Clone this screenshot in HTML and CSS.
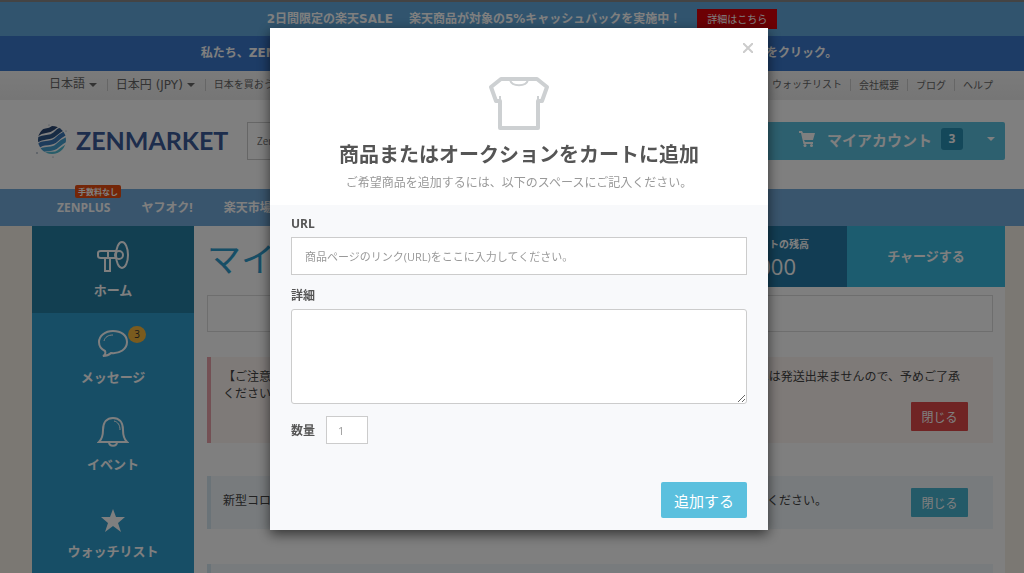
FILE: index.html
```html
<!DOCTYPE html>
<html lang="ja">
<head>
    <meta charset="UTF-8">
    <meta name="viewport" content="width=device-width, initial-scale=1.0">
    <title>ZenMarket</title>
    <link rel="stylesheet" href="styles.css">
</head>
<body>
    <div class="page">
        <div class="sale-banner">
            <span>2日間限定の楽天SALE</span>
            <span>楽天商品が対象の5%キャッシュバックを実施中！</span>
            <a href="#" class="sale-link">詳細はこちら</a>
        </div>
        <div class="notice-banner">
            <div class="notice-text"><span>私たち、ZENMARKET</span><span>をクリック。</span></div>
        </div>

        <div class="topbar">
            <div class="topbar-left">
                <a href="#">日本語 <i class="caret"></i></a>
                <a href="#">日本円 (JPY) <i class="caret"></i></a>
                <a href="#" class="small">日本を買おう</a>
            </div>
            <div class="topbar-right">
                <a href="#">ウォッチリスト</a>
                <a href="#">会社概要</a>
                <a href="#">ブログ</a>
                <a href="#">ヘルプ</a>
            </div>
        </div>

        <header class="header">
            <a href="#" class="logo">
                <svg width="32" height="34" viewBox="0 0 32 34">
                    <defs><clipPath id="globe"><circle cx="16" cy="16" r="14"/></clipPath></defs>
                    <g clip-path="url(#globe)" fill="none" stroke-width="4.500">
                        <path stroke="#2b4672" d="M-1 12C7 4 11 9 17 4S24 0 28-2"/>
                        <path stroke="#2f5688" d="M-1 18C7 10 13 16 19 10S27 5 32 2"/>
                        <path stroke="#3b78b8" d="M-1 25C8 15 14 22 20 16S27 11 33 7"/>
                        <path stroke="#46a0d0" d="M0 31C8 21 15 28 21 22S28 17 34 14"/>
                        <path stroke="#53bcd4" d="M5 35C11 26 17 33 23 28S29 24 34 20"/>
                    </g>
                    <g fill="#7b8ba5"><circle cx="13" cy="1" r=".6"/><circle cx="1" cy="29" r=".8"/><circle cx="17" cy="33" r=".6"/><circle cx="30" cy="7" r=".6"/></g>
                </svg>
                <span>ZENMARKET</span>
            </a>
            <input type="text" class="search" placeholder="ZenMarket" aria-label="検索">
            <button type="button" class="account">
                <svg width="16" height="16" viewBox="0 0 16 16" fill="#fff">
                    <path d="M0 0h3l1 2h12l-2 7H5l1 2h8v2H4.500L2 2H0z"/>
                    <circle cx="6" cy="14.500" r="1.500"/><circle cx="12.500" cy="14.500" r="1.500"/>
                </svg>
                <span>マイアカウント</span>
                <span class="account-count">3</span>
                <i class="caret"></i>
            </button>
        </header>

        <nav class="nav">
            <a href="#">ZENPLUS<span class="nav-badge">手数料なし</span></a>
            <a href="#">ヤフオク!</a>
            <a href="#">楽天市場</a>
        </nav>

        <div class="main">
            <aside class="sidebar">
                <a href="#" class="side-item active">
                    <svg width="32" height="32" viewBox="0 0 32 32" fill="none" stroke="#fff" stroke-width="2">
                        <ellipse cx="25" cy="14" rx="6" ry="13"/>
                        <path d="M19 10H4q-3 0-3 2v3q0 2 3 2h15M8 17v13h5V17M11 10v7"/>
                        <ellipse cx="22" cy="14" rx="4" ry="4"/>
                    </svg>
                    ホーム
                </a>
                <a href="#" class="side-item">
                    <svg width="32" height="32" viewBox="0 0 32 32" fill="none" stroke="#fff" stroke-width="2">
                        <path d="M16 3C8 3 2 8 2 14c0 4 2 7 6 9 1 2 0 4-2 5 4 0 6-1 8-3 9 1 16-4 16-11S24 3 16 3z"/>
                        <path stroke-width="1" d="M7 13c1-4 4-6 9-6"/>
                    </svg>
                    メッセージ
                    <span class="side-badge">3</span>
                </a>
                <a href="#" class="side-item">
                    <svg width="32" height="32" viewBox="0 0 32 32" fill="none" stroke="#fff" stroke-width="2">
                        <path d="M2 27c3-3 4-6 4-12C6 7 10 3 16 3s10 4 10 12c0 6 1 9 4 12z"/>
                        <path d="M12 27c0 5 8 5 8 0"/>
                        <path stroke-width="1" d="M17 6c4 1 6 4 6 9"/>
                    </svg>
                    イベント
                </a>
                <a href="#" class="side-item">
                    <svg width="32" height="32" viewBox="0 0 32 32" fill="#fff">
                        <path d="M16 7l3 8h9l-7 6 3 9-8-6-8 6 3-9-7-6h9z"/>
                    </svg>
                    ウォッチリスト
                </a>
            </aside>

            <main class="content">
                <div class="content-head">
                    <h1>マイアカウント</h1>
                    <div class="balance">
                        <span>ウォレットの残高</span>
                        <strong>¥000</strong>
                    </div>
                    <a href="#" class="charge">チャージする</a>
                </div>
                <div class="panel"></div>
                <div class="alert alert-danger">
                    <div class="alert-text">
                        <p><span>【ご注意】</span><span>へは発送出来ませんので、予めご了承</span></p>
                        <p>ください。</p>
                    </div>
                    <button type="button" class="btn btn-danger">閉じる</button>
                </div>
                <div class="alert alert-info">
                    <p class="alert-text"><span>新型コロナ</span><span>確認ください。</span></p>
                    <button type="button" class="btn btn-info">閉じる</button>
                </div>
                <div class="alert alert-info"></div>
            </main>
        </div>
    </div>

    <div class="overlay">
        <form class="modal" role="dialog" aria-labelledby="modal-title">
            <div class="modal-header">
                <button type="button" class="close" aria-label="閉じる">
                    <svg width="10" height="10" viewBox="0 0 10 10" stroke="#ccc" stroke-width="2"><path d="M0 0l10 10M10 0L0 10"/></svg>
                </button>
                <svg width="62" height="54" viewBox="0 0 62 54" fill="none" stroke="#cdd0d2" stroke-width="4" stroke-linejoin="round">
                    <path d="M13 3h36l10 8-5 14h-4v27H12V25H8L3 11z"/>
                    <path stroke-width="2" d="M12 25v-5M50 25v-5M22 4c2 7 16 7 18 0"/>
                </svg>
                <h2 id="modal-title">商品またはオークションをカートに追加</h2>
                <p>ご希望商品を追加するには、以下のスペースにご記入ください。</p>
            </div>
            <div class="modal-body">
                <label for="url">URL</label>
                <input type="text" id="url" placeholder="商品ページのリンク(URL)をここに入力してください。">
                <label for="details">詳細</label>
                <textarea id="details"></textarea>
                <div class="quantity">
                    <label for="quantity">数量</label>
                    <input type="text" id="quantity" value="1">
                </div>
                <button type="submit" class="submit">追加する</button>
            </div>
        </form>
    </div>
</body>
</html>
```
FILE: styles.css
```css
* {
    box-sizing: border-box;
}
body {
    margin: 0;
    height: 100vh;
    overflow: hidden;
    background: #f6f0e6;
    color: #444;
    font-family: "Open Sans", "Noto Sans CJK JP", sans-serif;
    font-size: 12px;
    line-height: 17px;
}
a {
    color: inherit;
    text-decoration: none;
}
h1, h2, p {
    margin: 0;
}
button, input, textarea {
    font-family: inherit;
}
svg {
    flex: none;
}
.page {
    height: 100vh;
    overflow: hidden;
    display: flex;
    flex-direction: column;
    border-top: 2px solid #888;
}
.page > * {
    flex: none;
}
.sale-banner, .notice-banner, .topbar-left {
    font-family: "DejaVu Sans", "Noto Sans CJK JP", sans-serif;
}
.caret {
    display: inline-block;
    border: 4px solid transparent;
    border-top-color: currentColor;
    border-bottom: 0;
    vertical-align: middle;
}

/* banners */
.sale-banner {
    display: flex;
    justify-content: center;
    align-items: center;
    gap: 16px;
    height: 34px;
    padding-left: 20px;
    background: #62a9dc;
    color: #fff;
    font-weight: bold;
}
.sale-link {
    padding: 2px 10px 1px;
    background: #d80008;
    font-size: 10px;
    font-weight: normal;
}
.notice-banner {
    display: flex;
    justify-content: center;
    align-items: center;
    height: 35px;
    padding-left: 14px;
    background: #3a78cc;
    color: #fff;
    font-weight: bold;
}
.notice-text {
    display: flex;
    justify-content: space-between;
    width: 63%;
}

/* top links */
.topbar {
    display: flex;
    justify-content: space-between;
    align-items: center;
    height: 29px;
    padding: 0 31px 2px 49px;
    background: linear-gradient(#f6f6f6, #ececec);
    color: #666;
}
.topbar-left, .topbar-right {
    display: flex;
    align-items: center;
}
.topbar a + a {
    margin-left: 8px;
    padding-left: 8px;
    border-left: 1px solid #ccc;
    line-height: 12px;
}
.topbar-left a + a {
    margin-left: 10px;
}
.topbar-right, .topbar .small {
    font-size: 10px;
}

/* header */
.header {
    display: flex;
    align-items: center;
    height: 89px;
    padding: 0 19px 7px 36px;
    background: #fff;
}
.logo {
    display: flex;
    align-items: center;
    gap: 8px;
    width: 211px;
    color: #3b5a98;
    font-family: Lato, sans-serif;
    font-size: 25px;
    font-weight: bold;
    line-height: 34px;
}
.logo span {
    margin-top: -3px;
}
.search {
    flex: 1;
    height: 38px;
    padding: 0 9px;
    border: 1px solid #ccc;
    font-size: 10px;
}
.account {
    display: flex;
    align-items: center;
    justify-content: flex-end;
    width: 280px;
    height: 38px;
    padding: 0 10px 4px 0;
    border: 0;
    border-radius: 0 2px 2px 0;
    background: #5bc0de;
    color: #fff;
    font-size: 15px;
    font-weight: bold;
}
.account svg {
    margin-right: 12px;
}
.account-count {
    margin: 0 24px 0 9px;
    width: 22px;
    border-radius: 3px;
    background: #2890b4;
    font-size: 12px;
    line-height: 22px;
}

/* shop navigation */
.nav {
    display: flex;
    align-items: center;
    gap: 31px;
    height: 37px;
    padding: 0 57px;
    background: #73aada;
    color: #fff;
    font-weight: bold;
}
.nav a {
    position: relative;
}
.nav-badge {
    position: absolute;
    left: 18px;
    top: -14px;
    padding: 0 3px;
    border-radius: 2px;
    background: #e84c10;
    font-size: 8px;
    line-height: 13px;
    white-space: nowrap;
}

/* account page */
.page .main {
    display: flex;
    flex: 1;
    margin: 0 19px 0 32px;
    background: #fff;
}
.sidebar {
    width: 162px;
    background: #2f9dcd;
}
.side-item {
    position: relative;
    display: flex;
    flex-direction: column;
    align-items: center;
    gap: 9px;
    height: 87px;
    padding-top: 15px;
    color: #fff;
    font-size: 13px;
    font-weight: bold;
}
.side-item.active {
    background: #247ea3;
}
.side-badge {
    position: absolute;
    left: 96px;
    top: 13px;
    width: 18px;
    border-radius: 50%;
    background: #f5b63c;
    color: #333;
    font-size: 10px;
    font-weight: normal;
    line-height: 17px;
    text-align: center;
}
.content {
    flex: 1;
    min-width: 0;
}
.content-head {
    display: flex;
    height: 61px;
    color: #fff;
}
.content-head h1 {
    flex: 1;
    padding-left: 13px;
    color: #2f9dcd;
    font-size: 34px;
    font-weight: normal;
    line-height: 66px;
}
.balance {
    display: flex;
    flex-direction: column;
    align-items: flex-end;
    width: 160px;
    padding: 10px 38px 0 0;
    background: #257ba8;
    font-size: 10px;
    font-weight: bold;
}
.balance strong {
    padding-right: 13px;
    font-size: 22px;
    font-weight: normal;
    line-height: 27px;
}
.charge {
    width: 158px;
    background: #39b9de;
    font-size: 13px;
    font-weight: bold;
    line-height: 60px;
    text-align: center;
}
.panel {
    height: 37px;
    margin: 8px 12px 25px 13px;
    border: 1px solid #ddd;
}
.alert {
    display: flex;
    align-items: center;
    height: 53px;
    margin: 0 12px 35px 13px;
    padding: 0 25px 0 12px;
    border-left: 4px solid;
}
.alert-danger {
    flex-direction: column;
    align-items: flex-end;
    height: 86px;
    margin-bottom: 33px;
    padding-top: 11px;
    background: #fdf4f1;
    border-color: #e8a0a8;
}
.alert-danger .alert-text {
    width: 100%;
    padding-right: 8px;
}
.alert-danger p, .alert-info .alert-text {
    display: flex;
    flex: 1;
    justify-content: space-between;
}
.alert-info {
    background: #f1f7fb;
    border-color: #d5e6f0;
}
.alert-info .alert-text {
    padding: 0 84px 4px 0;
}
.btn {
    flex: none;
    width: 57px;
    height: 29px;
    padding: 0;
    border: 0;
    border-radius: 1px;
    color: #fff;
    font-size: 12px;
}
.btn-danger {
    background: #e04848;
}
.btn-info {
    background: #48b4d0;
}

/* add to cart dialog */
.overlay {
    position: fixed;
    inset: 0;
    display: flex;
    justify-content: center;
    align-items: flex-start;
    padding: 28px 0 0 14px;
    background: rgba(0, 0, 0, 0.5);
}
.modal {
    width: 498px;
    max-width: 100%;
    background: #f8f9fb;
    box-shadow: 0 4px 12px rgba(0, 0, 0, 0.6);
}
.modal-header {
    position: relative;
    display: flex;
    flex-direction: column;
    align-items: center;
    height: 177px;
    padding-top: 48px;
    background: #fff;
    color: #999;
}
.modal-header h2 {
    margin: 11px 0 5px;
    color: #555;
    font-size: 20px;
    line-height: 28px;
}
.close {
    position: absolute;
    top: 10px;
    right: 10px;
    display: grid;
    place-items: center;
    width: 20px;
    height: 20px;
    padding: 0;
    border: 0;
    background: none;
}
.modal-body {
    display: flex;
    flex-direction: column;
    padding: 10px 21px 12px;
}
.modal-body label {
    margin-bottom: 5px;
    color: #555;
    font-weight: bold;
}
.modal-body input, .modal-body textarea {
    border: 1px solid #ccc;
    background: #fff;
    color: #999;
    font-size: 11px;
}
.modal-body input::placeholder {
    color: #999;
}
#url {
    height: 38px;
    margin-bottom: 12px;
    padding: 0 13px;
}
#details {
    height: 95px;
    margin-bottom: 12px;
    border-radius: 3px;
}
.quantity {
    display: flex;
    align-items: center;
    gap: 11px;
    margin-bottom: 38px;
}
.quantity label {
    margin: 0;
}
#quantity {
    width: 42px;
    height: 28px;
    padding: 0 11px;
}
.submit {
    align-self: flex-end;
    height: 36px;
    padding: 0 13px;
    border: 0;
    border-radius: 2px;
    background: #5bc0de;
    color: #fff;
    font-size: 15px;
}
```
